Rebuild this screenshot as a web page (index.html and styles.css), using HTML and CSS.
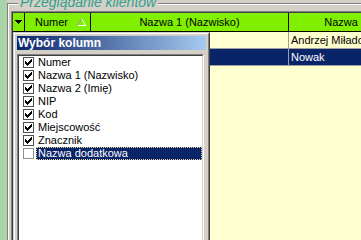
FILE: index.html
```html
<!DOCTYPE html>
<html lang="pl">
<head>
<meta charset="utf-8">
<title>Przeglądanie klientów</title>
<link rel="stylesheet" href="styles.css">
</head>
<body>
<svg class="sprite" width="0" height="0" aria-hidden="true">
  <symbol id="chk" viewBox="0 0 11 11">
    <path d="M8 2h1v1h-1z M7 3h2v1h-2z M2 4h1v1h-1z M6 4h3v1h-3z M2 5h2v1h-2z M5 5h3v1h-3z M2 6h5v1h-5z M3 7h3v1h-3z M4 8h1v1h-1z" fill="#000"/>
  </symbol>
</svg>
<div class="app">
  <div class="side"></div>
  <div class="group">
    <div class="group-inner">
      <div class="grid">
        <div class="grid-inner">
          <div class="hdr">
            <div class="hc c0"><svg class="drop" width="7" height="4" viewBox="0 0 7 4"><path d="M0 0h7v1h-1v1h-1v1h-1v1h-1v-1h-1v-1h-1v-1h-1z" fill="#000"/></svg></div>
            <div class="hc c1"><span>Numer</span><svg class="sort" width="9" height="8" viewBox="0 0 9 8"><path d="M4.5 0.5L8.5 7.5H0.5" fill="none" stroke="#ffffff"/><path d="M4.5 0.5L0.5 7.5" fill="none" stroke="#9a9a9a"/></svg></div>
            <div class="hc c2">Nazwa 1 (Nazwisko)</div>
            <div class="hc c3">Nazwa</div>
          </div>
          <div class="row">
            <div class="cell c0"></div>
            <div class="cell c1"></div>
            <div class="cell c2"></div>
            <div class="cell c3">Andrzej Miładowski</div>
          </div>
          <div class="row sel">
            <div class="cell c0"></div>
            <div class="cell c1"></div>
            <div class="cell c2"></div>
            <div class="cell c3">Nowak</div>
          </div>
        </div>
      </div>
    </div>
  </div>
  <div class="gtitle">Przeglądanie klientów</div>
  <div class="popup">
    <div class="pframe">
      <div class="ptitle">Wybór kolumn</div>
      <div class="plist">
        <div class="plist-inner">
          <div class="item"><span class="cb on"><svg width="11" height="11"><use href="#chk"/></svg></span><span class="lbl">Numer</span></div>
          <div class="item"><span class="cb on"><svg width="11" height="11"><use href="#chk"/></svg></span><span class="lbl">Nazwa 1 (Nazwisko)</span></div>
          <div class="item"><span class="cb on"><svg width="11" height="11"><use href="#chk"/></svg></span><span class="lbl">Nazwa 2 (Imię)</span></div>
          <div class="item"><span class="cb on"><svg width="11" height="11"><use href="#chk"/></svg></span><span class="lbl">NIP</span></div>
          <div class="item"><span class="cb on"><svg width="11" height="11"><use href="#chk"/></svg></span><span class="lbl">Kod</span></div>
          <div class="item"><span class="cb on"><svg width="11" height="11"><use href="#chk"/></svg></span><span class="lbl">Miejscowość</span></div>
          <div class="item"><span class="cb on"><svg width="11" height="11"><use href="#chk"/></svg></span><span class="lbl">Znacznik</span></div>
          <div class="item sel"><span class="cb"></span><span class="lbl">Nazwa dodatkowa</span></div>
        </div>
      </div>
    </div>
  </div>
</div>
</body>
</html>
```
FILE: styles.css
```css
html, body {
  margin: 0;
  padding: 0;
  height: 100%;
  overflow: hidden;
}
html {
  background: #d4d0c8;
}
body {
  min-width: 361px;
  min-height: 204px;
  background: #d4d0c8;
  font-family: "Liberation Sans", Arial, sans-serif;
  font-size: 11px;
  color: #000;
}
.sprite {
  position: absolute;
  width: 0;
  height: 0;
}
.app {
  position: relative;
  display: flex;
  height: 100%;
  min-height: 204px;
  overflow: hidden;
}
.side {
  flex: none;
  width: 7px;
  background: #a8d4a8;
}
.group {
  flex: 1;
  min-width: 0;
  margin-top: 3px;
  display: flex;
  flex-direction: column;
  border-top: 1px solid #808080;
  border-left: 1px solid #808080;
}
.group-inner {
  flex: 1;
  display: flex;
  flex-direction: column;
  padding: 6px 0 0 2px;
  border-top: 1px solid #fff;
  border-left: 1px solid #fff;
}
.grid {
  flex: 1;
  display: flex;
  flex-direction: column;
  border-top: 1px solid #808080;
  border-left: 1px solid #808080;
}
.grid-inner {
  flex: 1;
  overflow: hidden;
  background: #ffffd0;
  border-top: 1px solid #404040;
  border-left: 1px solid #404040;
}
.hdr, .row {
  display: flex;
}
.c0 { width: 12px; }
.c1 { width: 66px; }
.c2 { width: 198px; }
.c3 { width: 105px; }
.hc {
  flex: none;
  box-sizing: border-box;
  height: 19px;
  padding-top: 1px;
  line-height: 17px;
  background: #80f000;
  border-right: 1px solid #000;
  border-bottom: 1px solid #000;
  white-space: nowrap;
  overflow: hidden;
}
.hc.c0 {
  display: flex;
  justify-content: center;
  align-items: flex-start;
}
.drop {
  margin-top: 6px;
}
.hc.c1 {
  display: flex;
  align-items: flex-start;
  padding-left: 10px;
}
.sort {
  flex: none;
  margin: 4px 4px 0 auto;
}
.hc.c2, .hc.c3 {
  text-align: center;
}
.cell {
  flex: none;
  box-sizing: border-box;
  height: 17px;
  padding-left: 2px;
  line-height: 16px;
  border-right: 1px solid #a0a0a0;
  border-bottom: 1px solid #a0a0a0;
  white-space: nowrap;
  overflow: hidden;
}
.row.sel .cell {
  background: #0a246a;
  color: #fff;
}
.gtitle {
  position: absolute;
  left: 18px;
  top: -5px;
  padding: 0 2px;
  background: #d4d0c8;
  color: #33a08c;
  font-size: 14px;
  font-style: italic;
  line-height: 14px;
  white-space: nowrap;
}
.popup {
  position: absolute;
  left: 13px;
  top: 32px;
  width: 197px;
  height: 400px;
  box-sizing: border-box;
  border: 1px solid;
  border-color: #d4d0c8 #404040 #404040 #d4d0c8;
}
.pframe {
  box-sizing: border-box;
  height: 100%;
  padding: 2px;
  background: #d4d0c8;
  border: 1px solid;
  border-color: #fff #808080 #808080 #fff;
}
.ptitle {
  height: 14px;
  padding-left: 1px;
  line-height: 14px;
  font-size: 12px;
  font-weight: bold;
  color: #fff;
  background: linear-gradient(to right, #0a246a, #a6caf0);
  white-space: nowrap;
}
.plist {
  width: 187px;
  margin-top: 4px;
  box-sizing: border-box;
  border: 1px solid;
  border-color: #808080 #fff #fff #808080;
}
.plist-inner {
  height: 360px;
  background: #fff;
  border: 1px solid;
  border-color: #404040 #d4d0c8 #d4d0c8 #404040;
}
.item {
  display: flex;
  align-items: flex-start;
  height: 13px;
}
.cb {
  flex: none;
  box-sizing: border-box;
  width: 11px;
  height: 11px;
  margin: 1px 2px 0 4px;
  background: #fff;
  border: 1px solid #909090;
}
.cb.on {
  border-color: #505050;
}
.cb svg {
  display: block;
  margin: -1px 0 0 -1px;
}
.lbl {
  flex: 1;
  box-sizing: border-box;
  height: 13px;
  padding-left: 1px;
  line-height: 11px;
  border: 1px solid transparent;
  white-space: nowrap;
}
.item.sel .lbl {
  background: #0a246a;
  color: #fff;
  border: 1px dotted #f0dc96;
}
```
